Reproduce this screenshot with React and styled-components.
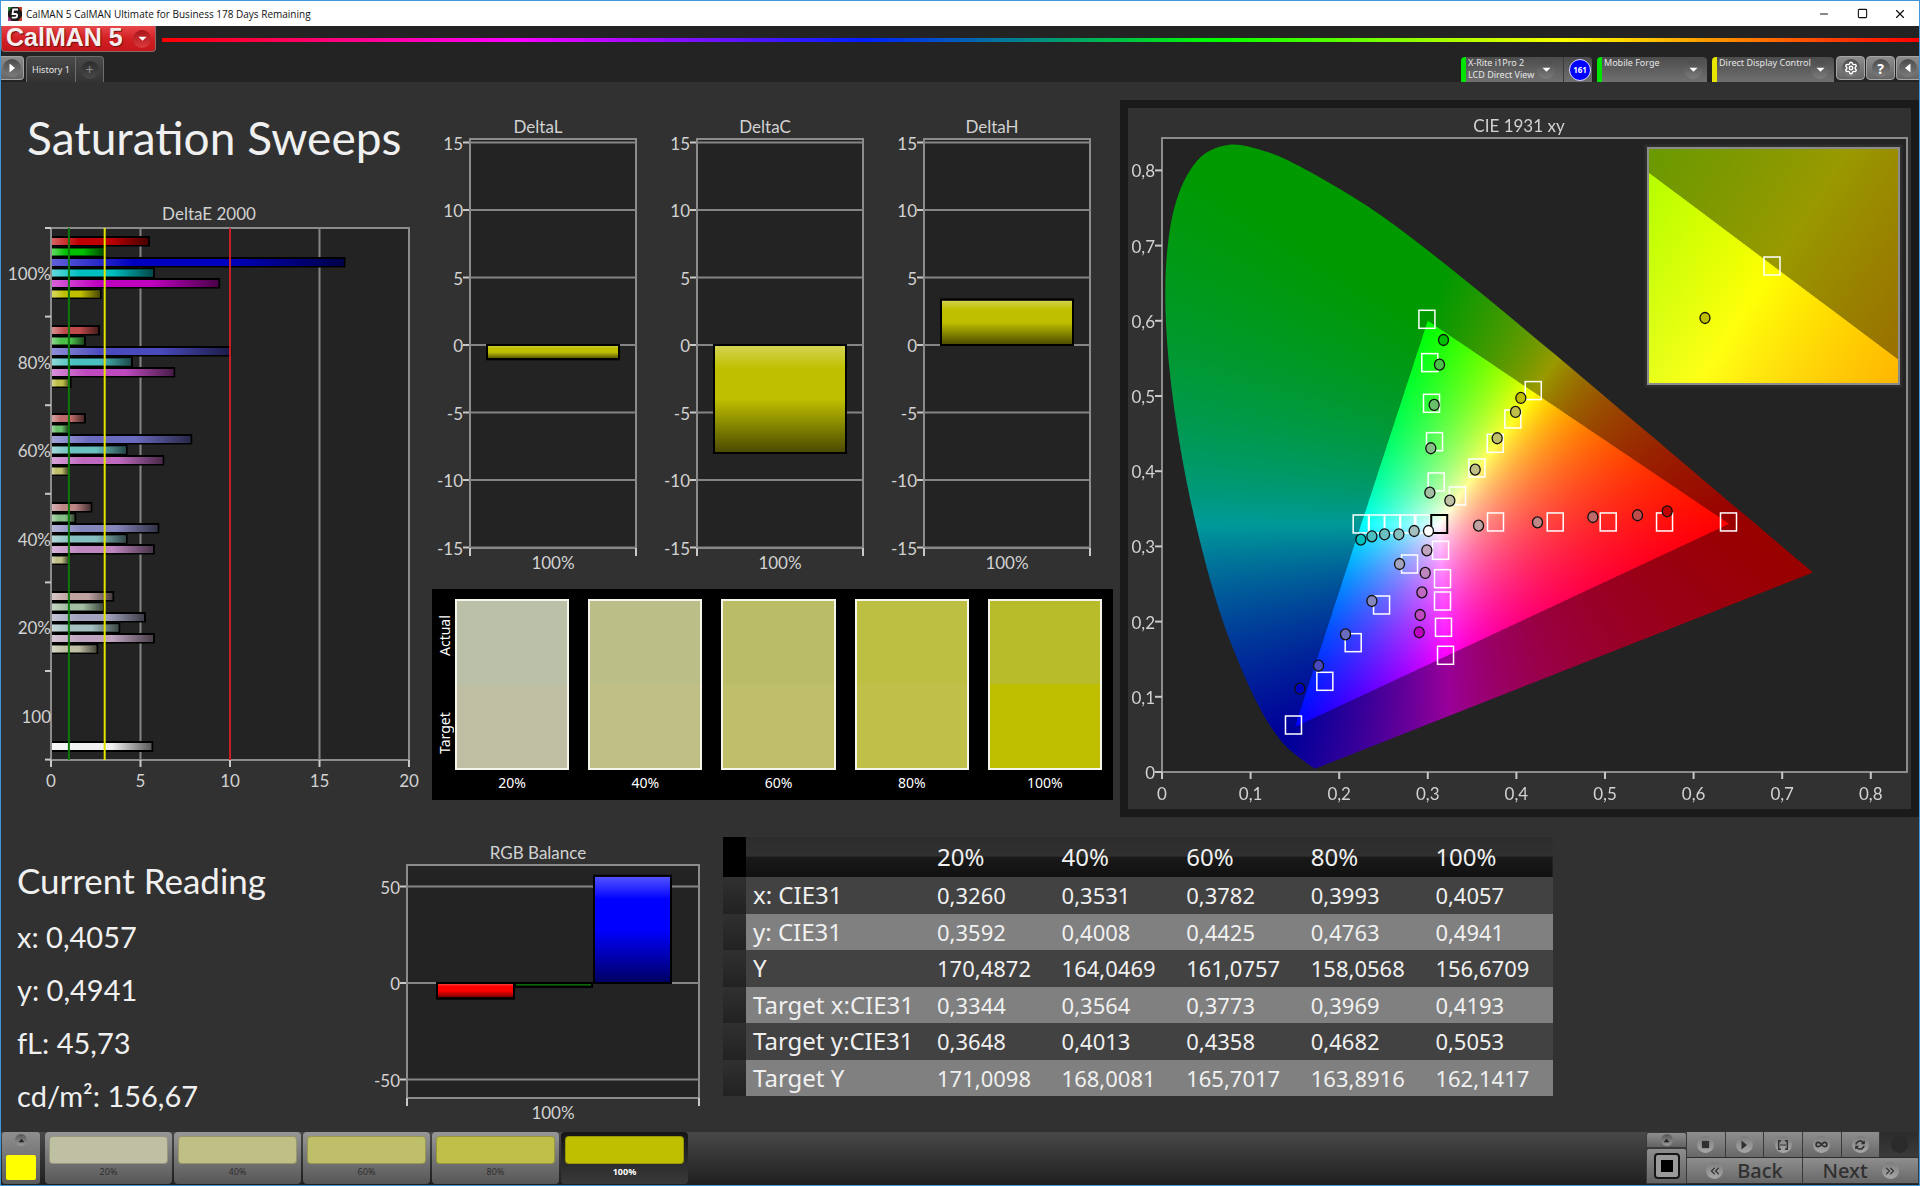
import { useEffect, useRef } from "react";
import styled, { createGlobalStyle, css } from "styled-components";
import { ChevronsLeft, ChevronsRight, Infinity as Loop, Minus, Settings, Square, X } from "lucide-react";
import { FaSyncAlt } from "react-icons/fa";

const HUES = {
  red: [1, 0, 0],
  green: [0, 1, 0],
  blue: [0, 0, 1],
  cyan: [0, 1, 1],
  magenta: [1, 0, 1],
  yellow: [1, 1, 0],
};
const FLOOR = { 100: 0, 80: 74, 60: 106, 40: 134, 20: 163 };

const sweepColor = (hue, level) =>
  `rgb(${HUES[hue].map((on) => (on ? 191 : FLOOR[level])).join(",")})`;

const deltaE = [
  { level: 100, values: [5.53, 3.05, 16.45, 5.8, 9.45, 2.83] },
  { level: 80, values: [2.73, 1.95, 10.07, 4.58, 6.94, 1.15] },
  { level: 60, values: [1.95, 1.06, 7.89, 4.28, 6.33, 1.06] },
  { level: 40, values: [2.31, 1.41, 6.05, 4.28, 5.8, 1.06] },
  { level: 20, values: [3.53, 3.01, 5.3, 3.87, 5.8, 2.64] },
];

const deltaCharts = [
  { title: "DeltaL", value: -1.05 },
  { title: "DeltaC", value: -8 },
  { title: "DeltaH", value: 3.36 },
];

const patches = [
  { level: 20, actual: "#bbc0a9" },
  { level: 40, actual: "#babf88" },
  { level: 60, actual: "#babd66" },
  { level: 80, actual: "#bcbf42" },
  { level: 100, actual: "#b8bc2b" },
];

const readings = ["x: 0,4057", "y: 0,4941", "fL: 45,73", "cd/m²: 156,67"];

const tableHead = ["20%", "40%", "60%", "80%", "100%"];
const tableRows = [
  ["x: CIE31", "0,3260", "0,3531", "0,3782", "0,3993", "0,4057"],
  ["y: CIE31", "0,3592", "0,4008", "0,4425", "0,4763", "0,4941"],
  ["Y", "170,4872", "164,0469", "161,0757", "158,0568", "156,6709"],
  ["Target x:CIE31", "0,3344", "0,3564", "0,3773", "0,3969", "0,4193"],
  ["Target y:CIE31", "0,3648", "0,4013", "0,4358", "0,4682", "0,5053"],
  ["Target Y", "171,0098", "168,0081", "165,7017", "163,8916", "162,1417"],
];

// spectral locus, 380 - 700 nm
const locus = [
  [0.1741, 0.005], [0.1714, 0.0051], [0.1644, 0.0109], [0.1566, 0.0177],
  [0.144, 0.0297], [0.1355, 0.0399], [0.1241, 0.0578], [0.1096, 0.0868],
  [0.0913, 0.1327], [0.0687, 0.2007], [0.0454, 0.295], [0.0235, 0.4127],
  [0.0082, 0.5384], [0.0039, 0.6548], [0.0139, 0.7502], [0.0389, 0.812],
  [0.0743, 0.8338], [0.1142, 0.8262], [0.1547, 0.8059], [0.2296, 0.7543],
  [0.3016, 0.6923], [0.3731, 0.6245], [0.4441, 0.5547], [0.5125, 0.4866],
  [0.5752, 0.4242], [0.627, 0.3725], [0.6658, 0.334], [0.6915, 0.3083],
  [0.719, 0.2809], [0.7347, 0.2653],
];

const targets = [
  [0.299, 0.602], [0.3023, 0.5444], [0.3042, 0.4903], [0.3076, 0.4393], [0.3095, 0.3857],
  [0.419, 0.5072], [0.396, 0.4695], [0.3761, 0.4371], [0.3554, 0.4043], [0.3335, 0.3671],
  [0.3764, 0.3325], [0.4438, 0.3325], [0.5036, 0.3325], [0.5672, 0.3325], [0.6394, 0.3325],
  [0.3144, 0.2948], [0.3166, 0.2571], [0.3166, 0.2274], [0.3177, 0.1924], [0.32, 0.1552],
  [0.2794, 0.2766], [0.2478, 0.2221], [0.2158, 0.172], [0.1838, 0.1206], [0.1484, 0.0625],
  [0.2248, 0.3298], [0.2421, 0.3298], [0.2602, 0.3298], [0.2775, 0.3298], [0.294, 0.3298],
];

// each list runs from 100% down to 20%
const measured = {
  green: [[0.3177, 0.5745], [0.3132, 0.5417], [0.3072, 0.4881], [0.3034, 0.4305], [0.3023, 0.3715]],
  yellow: [[0.405, 0.4974], [0.399, 0.4788], [0.3783, 0.4438], [0.3535, 0.4021], [0.3249, 0.3609]],
  red: [[0.5702, 0.3467], [0.5367, 0.3414], [0.4863, 0.3391], [0.4238, 0.332], [0.3573, 0.3276]],
  magenta: [[0.2903, 0.1858], [0.2914, 0.2088], [0.2933, 0.2389], [0.2971, 0.2647], [0.2989, 0.2948]],
  blue: [[0.1556, 0.1108], [0.1767, 0.1414], [0.2071, 0.1831], [0.2369, 0.2274], [0.2681, 0.2766]],
  cyan: [[0.2244, 0.309], [0.2369, 0.3134], [0.2512, 0.3161], [0.2673, 0.3161], [0.2846, 0.3205]],
};
const LEVELS = [100, 80, 60, 40, 20];

/* ---------- charts ---------- */

const DeltaEChart = () => {
  const left = 50;
  const top = 28;
  const bottom = 560;
  const unit = 17.9;
  const pitch = 10.5;
  const px = (v) => left + v * unit;
  const starts = [36, 125, 213, 302, 391];
  const hues = Object.keys(HUES);
  return (
    <Chart viewBox="0 0 423 596" role="img" aria-label="DeltaE 2000">
      <defs>
        <linearGradient id="shadeX">
          <stop offset="0" stopColor="#fff" stopOpacity=".38" />
          <stop offset=".28" stopColor="#fff" stopOpacity="0" />
          <stop offset=".6" stopColor="#000" stopOpacity="0" />
          <stop offset="1" stopColor="#000" stopOpacity=".62" />
        </linearGradient>
      </defs>
      <text x="208" y="20" textAnchor="middle">DeltaE 2000</text>
      <Plot x={left} y={top} width={unit * 20} height={bottom - top} />
      {[5, 10, 15].map((v) => (
        <GridLine key={v} x1={px(v)} x2={px(v)} y1={top} y2={bottom} />
      ))}
      {[0, 5, 10, 15, 20].map((v) => (
        <g key={v}>
          <Tick x1={px(v)} x2={px(v)} y1={bottom} y2={bottom + 7} />
          <text x={px(v)} y="587" textAnchor="middle">{v}</text>
        </g>
      ))}
      {[0, 1, 2, 3, 4, 5, 6].map((i) => (
        <Tick key={i} x1={left - 6} x2={left} y1={top + i * 88.6} y2={top + i * 88.6} />
      ))}
      {["100%", "80%", "60%", "40%", "20%", "100"].map((label, i) => (
        <text key={i} x={left} y={80 + i * 88.6} textAnchor="end">{label}</text>
      ))}
      {deltaE.map((group, g) =>
        group.values.map((v, i) => (
          <g key={`${g}-${i}`}>
            <rect x={left + 1} y={starts[g] + i * pitch} width={v * unit - 1} height="10.5" />
            <rect x={left + 1} y={starts[g] + i * pitch + 2} width={v * unit - 3} height="7" fill={sweepColor(hues[i], group.level)} />
            <rect x={left + 1} y={starts[g] + i * pitch + 2} width={v * unit - 3} height="7" fill="url(#shadeX)" />
          </g>
        ))
      )}
      <rect x={left + 1} y="541" width={5.71 * unit - 1} height="11" />
      <rect x={left + 1} y="543" width={5.71 * unit - 3} height="7" fill="#f0f0f0" />
      <rect x={left + 1} y="543" width={5.71 * unit - 3} height="7" fill="url(#shadeX)" />
      <Limit $color="#0b7a0b" x1={px(1)} x2={px(1)} y1={top} y2={bottom} />
      <Limit $color="#e2e200" x1={px(3)} x2={px(3)} y1={top} y2={bottom} />
      <Limit $color="#c81e28" x1={px(10)} x2={px(10)} y1={top} y2={bottom} />
    </Chart>
  );
};

const ColumnChart = ({ title, size, frame, zero, unit, ticks, bars }) => {
  const [left, top, right, bottom] = frame;
  const py = (v) => zero - v * unit;
  return (
    <Chart viewBox={`0 0 ${size[0]} ${size[1]}`} role="img" aria-label={title}>
      <defs>
        <linearGradient id="shadeY" x1="0" y1="0" x2="0" y2="1">
          <stop offset="0" stopColor="#fff" stopOpacity=".34" />
          <stop offset=".22" stopColor="#fff" stopOpacity="0" />
          <stop offset=".5" stopColor="#000" stopOpacity="0" />
          <stop offset="1" stopColor="#000" stopOpacity=".62" />
        </linearGradient>
      </defs>
      <text x={(left + right) / 2 - 15} y={top - 6} textAnchor="middle">{title}</text>
      <Plot x={left} y={top} width={right - left} height={bottom - top} />
      {ticks.map((v) => (
        <g key={v}>
          <GridLine x1={left} x2={right} y1={py(v)} y2={py(v)} />
          <Tick x1={left - 7} x2={left - 1} y1={py(v)} y2={py(v)} />
          <text x={left - 7} y={py(v) + 7} textAnchor="end">{v}</text>
        </g>
      ))}
      <Tick x1={left} x2={left} y1={bottom} y2={bottom + 8} />
      <Tick x1={right} x2={right} y1={bottom} y2={bottom + 8} />
      <text x={(left + right) / 2} y={bottom + 21} textAnchor="middle">100%</text>
      {bars.map(({ x, width, value, color }) => {
        const y = Math.min(py(0), py(value));
        const height = Math.abs(value) * unit;
        return (
          <g key={x}>
            <ColumnBar x={x} y={y} width={width} height={height} fill={color} />
            <ColumnBar x={x} y={y} width={width} height={height} fill="url(#shadeY)" />
          </g>
        );
      })}
    </Chart>
  );
};

const CIE = { width: 783, height: 701, left: 34, right: 779, top: 30, bottom: 664 };
const INSET = { x: 520, y: 40, width: 251, height: 236 };
const cx = (x) => CIE.left + x * 886;
const cy = (y) => CIE.bottom - y * 752;

// chromaticity to display colour, dimmed where it falls outside Rec.709
const shade = (x, y) => {
  const X = x / y;
  const Z = (1 - x - y) / y;
  const rgb = [
    3.2406 * X - 1.5372 - 0.4986 * Z,
    -0.9689 * X + 1.8758 + 0.0415 * Z,
    0.0557 * X - 0.204 + 1.057 * Z,
  ];
  const gain = Math.min(...rgb) < 0 ? 153 : 255;
  const peak = Math.max(...rgb);
  return rgb.map((c) => (Math.max(c, 0) / peak) * gain);
};

const paintArea = (width, height, toXY) => {
  const canvas = document.createElement("canvas");
  canvas.width = width;
  canvas.height = height;
  const ctx = canvas.getContext("2d");
  const image = ctx.createImageData(width, height);
  for (let j = 0; j < height; j++) {
    for (let i = 0; i < width; i++) {
      const sum = [0, 0, 0];
      for (const [di, dj] of [[0.25, 0.25], [0.75, 0.25], [0.25, 0.75], [0.75, 0.75]]) {
        const [x, y] = toXY(i + di, j + dj);
        shade(x, Math.max(y, 0.001)).forEach((c, k) => (sum[k] += c / 4));
      }
      image.data.set([...sum, 255], (j * width + i) * 4);
    }
  }
  ctx.putImageData(image, 0, 0);
  return canvas;
};

const traceLocus = (ctx) => {
  const pts = locus.map(([x, y]) => [cx(x), cy(y)]);
  ctx.beginPath();
  ctx.moveTo(...pts[0]);
  for (let i = 0; i < pts.length - 1; i++) {
    const a = pts[Math.max(i - 1, 0)];
    const b = pts[i];
    const c = pts[i + 1];
    const d = pts[Math.min(i + 2, pts.length - 1)];
    ctx.bezierCurveTo(
      b[0] + (c[0] - a[0]) / 6, b[1] + (c[1] - a[1]) / 6,
      c[0] - (d[0] - b[0]) / 6, c[1] - (d[1] - b[1]) / 6,
      c[0], c[1]
    );
  }
  ctx.closePath();
};

const CieChart = () => {
  const canvasRef = useRef(null);

  useEffect(() => {
    const ctx = canvasRef.current.getContext("2d");
    ctx.fillStyle = "#232323";
    ctx.fillRect(CIE.left, CIE.top, CIE.right - CIE.left, CIE.bottom - CIE.top);
    ctx.save();
    traceLocus(ctx);
    ctx.clip();
    ctx.drawImage(
      paintArea(CIE.width, CIE.height, (i, j) => [(i - CIE.left) / 886, (CIE.bottom - j) / 752]),
      0, 0
    );
    ctx.restore();
    ctx.drawImage(
      paintArea(INSET.width, INSET.height, (i, j) => [
        0.4193 + (i - INSET.width / 2) / 4950,
        0.5053 - (j - INSET.height / 2) / 4670,
      ]),
      INSET.x, INSET.y
    );
  }, []);

  return (
    <CiePanel>
      <CieCanvas ref={canvasRef} width={CIE.width} height={CIE.height} />
      <CieOverlay viewBox={`0 0 ${CIE.width} ${CIE.height}`} role="img" aria-label="CIE 1931 xy">
        <text x="391" y="24" textAnchor="middle">CIE 1931 xy</text>
        <Outline x={CIE.left} y={CIE.top} width={CIE.right - CIE.left} height={CIE.bottom - CIE.top} />
        {[0, 1, 2, 3, 4, 5, 6, 7, 8].map((n) => (
          <g key={n}>
            <Tick x1={cx(n / 10)} x2={cx(n / 10)} y1={CIE.bottom} y2={CIE.bottom + 7} />
            <text x={cx(n / 10)} y="692" textAnchor="middle">{n ? `0,${n}` : "0"}</text>
            <Tick x1={CIE.left - 7} x2={CIE.left} y1={cy(n / 10)} y2={cy(n / 10)} />
            <text x={CIE.left - 7} y={cy(n / 10) + 7} textAnchor="end">{n ? `0,${n}` : "0"}</text>
          </g>
        ))}
        {targets.map(([x, y]) => (
          <Target key={`${x}-${y}`} x={cx(x) - 8} y={cy(y) - 9} width="16" height="18" />
        ))}
        <Target $dark x={cx(0.3129) - 8} y={cy(0.3298) - 9} width="16" height="18" />
        {Object.entries(measured).map(([hue, list]) =>
          list.map(([x, y], i) => (
            <Reading key={`${hue}-${i}`} cx={cx(x)} cy={cy(y)} rx="5" ry="5.5" fill={sweepColor(hue, LEVELS[i])} />
          ))
        )}
        <Reading cx={cx(0.3008)} cy={cy(0.3205)} rx="5" ry="5.5" fill="#fff" />
        <InsetShadow x={INSET.x - 2} y={INSET.y - 2} width={INSET.width + 4} height={INSET.height + 4} />
        <Outline x={INSET.x} y={INSET.y} width={INSET.width} height={INSET.height} />
        <Target x={INSET.x + 116} y={INSET.y + 109} width="16" height="18" />
        <Reading cx={INSET.x + 57} cy={INSET.y + 170} rx="5" ry="5.5" fill={sweepColor("yellow", 100)} />
      </CieOverlay>
    </CiePanel>
  );
};

/* ---------- icons ---------- */

const Glyph = ({ d, size = 10 }) => (
  <svg width={size} height={size} viewBox="0 0 10 10" fill="currentColor" aria-hidden="true">
    <path d={d} />
  </svg>
);
const DOWN = "M0.5 3h9L5 7.6z";
const UP = "M1 7.5h8L5 2.5z";
const RIGHT = "M2.5 0.5v9L8 5z";
const LEFT = "M7.5 0.5v9L2 5z";
const STOP = "M1 1h8v8h-8z";
const RANGE =
  "M0 0h3v1.4H1.4v7.2H3V10H0zM10 0H7v1.4h1.6v7.2H7V10h3zM2.4 4.3h1.3v1.4H2.4zM4.4 4.3h1.2v1.4H4.4zM6.3 4.3h1.3v1.4H6.3z";

const AppIcon = () => (
  <svg width="14" height="14" viewBox="0 0 14 14" aria-hidden="true">
    <rect width="14" height="14" fill="#1d1a1a" />
    <path d="M0 0h4L0 5z" fill="#2e8b3c" />
    <path d="M10 0h4v5z" fill="#c0392b" />
    <path d="M0 9v5h4z" fill="#b03a8c" />
    <path d="M14 9v5h-4z" fill="#d0452f" />
    <path d="M10 2.5H5.2L4.6 7h3.2q1.5 0 1.3 1.8t-2 1.9H3.8" fill="none" stroke="#fff" strokeWidth="1.8" />
  </svg>
);

/* ---------- app ---------- */

const App = () => (
  <Window>
    <GlobalStyle />
    <TitleBar>
      <AppIcon />
      <WindowTitle>CalMAN 5 CalMAN Ultimate for Business 178 Days Remaining</WindowTitle>
      <WindowButton aria-label="Minimize"><Minus size={12} strokeWidth={2} /></WindowButton>
      <WindowButton aria-label="Maximize"><Square size={11} strokeWidth={2.4} /></WindowButton>
      <WindowButton aria-label="Close"><X size={14} strokeWidth={2} /></WindowButton>
    </TitleBar>

    <BrandBar>
      <Brand>
        CalMAN 5
        <Dimple $red><Glyph d={DOWN} size={9} /></Dimple>
      </Brand>
      <Rainbow />
    </BrandBar>

    <TabBar>
      <SquareButton $edge="left" aria-label="Open sidebar"><Dimple><Glyph d={RIGHT} /></Dimple></SquareButton>
      <Tabs>
        <Tab>History 1</Tab>
        <Tab $add aria-label="Add history"><Dimple $dark>+</Dimple></Tab>
      </Tabs>
      <Device $width={131} $status="#00e400">
        <span>X-Rite i1Pro 2<br />LCD Direct View</span>
        <Dimple><Glyph d={DOWN} size={9} /></Dimple>
        <CounterCell><Counter>161</Counter></CounterCell>
      </Device>
      <Device $width={110} $status="#00e400">
        <span>Mobile Forge</span>
        <Dimple><Glyph d={DOWN} size={9} /></Dimple>
      </Device>
      <Device $width={122} $status="#e6e600">
        <span>Direct Display Control</span>
        <Dimple><Glyph d={DOWN} size={9} /></Dimple>
      </Device>
      <SquareButton aria-label="Settings"><Dimple><Settings size={14} strokeWidth={2.4} /></Dimple></SquareButton>
      <SquareButton aria-label="Help"><Dimple>?</Dimple></SquareButton>
      <SquareButton $edge="right" aria-label="Collapse"><Dimple><Glyph d={LEFT} /></Dimple></SquareButton>
    </TabBar>

    <Main>
      <TopRow>
        <section>
          <PageTitle>Saturation Sweeps</PageTitle>
          <DeltaEChart />
        </section>
        <Middle>
          <DeltaRow>
            {deltaCharts.map(({ title, value }) => (
              <ColumnChart
                key={title}
                title={title}
                size={[227, 460]}
                frame={[46, 24, 212, 433]}
                zero={230}
                unit={13.5}
                ticks={[15, 10, 5, 0, -5, -10, -15]}
                bars={[{ x: 63, width: 132, value, color: "#bfbf00" }]}
              />
            ))}
          </DeltaRow>
          <PatchPanel>
            <PatchSides>
              <span>Actual</span>
              <span>Target</span>
            </PatchSides>
            {patches.map(({ level, actual }) => (
              <PatchItem key={level}>
                <Patch $actual={actual} $target={sweepColor("yellow", level)} />
                <figcaption>{level}%</figcaption>
              </PatchItem>
            ))}
          </PatchPanel>
        </Middle>
        <CieChart />
      </TopRow>

      <BottomRow>
        <Current>
          <h2>Current Reading</h2>
          {readings.map((text) => (
            <p key={text}>{text}</p>
          ))}
        </Current>
        <ColumnChart
          title="RGB Balance"
          size={[356, 290]}
          frame={[40, 28, 332, 261]}
          zero={146}
          unit={1.93}
          ticks={[50, 0, -50]}
          bars={[
            { x: 70, width: 77, value: -8, color: "#f00" },
            { x: 148, width: 77, value: -2, color: "#0a6a0a" },
            { x: 227, width: 77, value: 55.5, color: "#00f" },
          ]}
        />
        <DataTable>
          <thead>
            <tr>
              <Corner />
              <LabelHead />
              {tableHead.map((text) => (
                <th key={text} scope="col">{text}</th>
              ))}
            </tr>
          </thead>
          <tbody>
            {tableRows.map(([label, ...cells]) => (
              <tr key={label}>
                <Handle />
                <th scope="row">{label}</th>
                {cells.map((text, i) => (
                  <td key={i}>{text}</td>
                ))}
              </tr>
            ))}
          </tbody>
        </DataTable>
      </BottomRow>
    </Main>

    <Footer>
      <CurrentColor aria-label="Current pattern">
        <MiniDimple><Glyph d={UP} size={7} /></MiniDimple>
        <i />
      </CurrentColor>
      {patches.map(({ level }) => (
        <Step key={level} $active={level === 100} $color={sweepColor("yellow", level)}>
          <i />
          {level}%
        </Step>
      ))}
      <Controls>
        <PatternStack>
          <PatternButton aria-label="Pattern options"><MiniDimple><Glyph d={UP} size={7} /></MiniDimple></PatternButton>
          <PatternButton aria-label="Pattern window"><PatternIcon /></PatternButton>
        </PatternStack>
        <Transport>
          <ControlButton aria-label="Stop"><Knob><Glyph d={STOP} size={9} /></Knob></ControlButton>
          <ControlButton aria-label="Read"><Knob><Glyph d={RIGHT} /></Knob></ControlButton>
          <ControlButton aria-label="Read series"><Knob><Glyph d={RANGE} /></Knob></ControlButton>
          <ControlButton aria-label="Read continuously"><Knob><Loop size={13} strokeWidth={3} /></Knob></ControlButton>
          <ControlButton aria-label="Refresh"><Knob><FaSyncAlt size={10} /></Knob></ControlButton>
          <ControlButton $off aria-label="Status" disabled><Knob $off /></ControlButton>
          <ControlButton $wide><Knob><ChevronsLeft size={14} /></Knob>Back</ControlButton>
          <ControlButton $wide>Next<Knob><ChevronsRight size={14} /></Knob></ControlButton>
        </Transport>
      </Controls>
    </Footer>
  </Window>
);

export default App;

const GlobalStyle = createGlobalStyle`
  * {
    box-sizing: border-box;
  }
  body {
    margin: 0;
    background: #313131;
    font-family: "Noto Sans", "Open Sans", sans-serif;
    color: #e6e6e6;
  }
  button {
    font-family: inherit;
    color: inherit;
    border: 0;
    padding: 0;
    margin: 0;
    background: none;
  }
`;

const Window = styled.div`
  display: flex;
  flex-direction: column;
  min-height: 100vh;
  border: 1px solid #3f97d8;
  background: #313131;
`;

const TitleBar = styled.header`
  display: flex;
  align-items: center;
  height: 25px;
  padding-left: 7px;
  background: #fff;
  color: #111;
`;

const WindowTitle = styled.span`
  flex: 1;
  padding-left: 4px;
  font-family: "Open Sans", sans-serif;
  font-size: 10px;
`;

const WindowButton = styled.button`
  display: flex;
  align-items: center;
  justify-content: center;
  width: 38px;
  height: 24px;
`;

const BrandBar = styled.div`
  display: flex;
  align-items: center;
  gap: 6px;
  height: 28px;
  background: #232323;
`;

const Brand = styled.button`
  display: flex;
  align-items: center;
  justify-content: space-between;
  align-self: flex-start;
  width: 155px;
  height: 26px;
  padding: 0 4px 4px 4px;
  border: 1px solid #8a6a6a;
  border-top: 0;
  border-radius: 0 0 4px 4px;
  background: linear-gradient(#e8484a, #d32024 50%, #c4171b);
  color: #f4f0f0;
  font: bold 25px/20px "Liberation Sans", sans-serif;
  text-shadow: 1px 1px 1px #6a1010;
  white-space: nowrap;
`;

const Rainbow = styled.div`
  flex: 1;
  height: 4px;
  background: linear-gradient(90deg, #f00, #f0f 20%, #0020ff 40%, #0f0 60%, #ff0 80%, #f00);
`;

const Dimple = styled.span`
  display: inline-flex;
  align-items: center;
  justify-content: center;
  flex: none;
  width: 18px;
  height: 18px;
  border-radius: 50%;
  background: linear-gradient(#4c4c4c, #7c7c7c);
  color: #fff;
  font-size: 14px;
  font-weight: bold;
  text-shadow: none;
  ${(props) =>
    props.$red &&
    css`
      margin-top: 4px;
      background: linear-gradient(#a8151a, #dc3a3e);
    `}
  ${(props) =>
    props.$dark &&
    css`
      background: linear-gradient(#2c2c2c, #484848);
      color: #8a8a8a;
      font-weight: normal;
    `}
`;

const TabBar = styled.nav`
  display: flex;
  align-items: flex-end;
  height: 28px;
  background: #232323;
`;

const SquareButton = styled.button`
  display: flex;
  align-items: center;
  justify-content: center;
  width: ${(props) => (props.$edge ? 23 : 29)}px;
  height: 24px;
  margin: 0 ${(props) => (props.$edge ? 0 : 1)}px 2px 0;
  border: 1px solid #a4a4a4;
  border-radius: 4px;
  background: linear-gradient(#8c8c8c, #666);
  ${(props) => props.$edge === "left" && "border-radius: 0 4px 4px 0; border-left: 0;"}
  ${(props) => props.$edge === "right" && "border-radius: 4px 0 0 4px; border-right: 0;"}
`;

const Tabs = styled.div`
  display: flex;
  flex: 1;
  padding-left: 2px;
`;

const Tab = styled.button`
  width: ${(props) => (props.$add ? 28 : 50)}px;
  height: 26px;
  border: 1px solid #6e6e6e;
  border-bottom: 0;
  border-left-width: ${(props) => (props.$add ? 0 : 1)}px;
  border-radius: ${(props) => (props.$add ? "0 4px 0 0" : "4px 0 0 0")};
  background: linear-gradient(#4a4a4a, #333);
  font-size: 9px;
`;

const Device = styled.button`
  display: flex;
  align-items: center;
  width: ${(props) => props.$width}px;
  height: 25px;
  margin-right: 5px;
  padding-right: 5px;
  border-left: 5px solid ${(props) => props.$status};
  border-radius: 4px 4px 0 0;
  background: linear-gradient(#4c4c4c, #707070);
  font-size: 9px;
  line-height: 12px;
  text-align: left;
  & > span:first-child {
    flex: 1;
    align-self: flex-start;
    padding-left: 2px;
    white-space: nowrap;
  }
  &:nth-of-type(4) {
    margin-right: 2px;
  }
`;

const CounterCell = styled.span`
  display: flex;
  align-items: center;
  height: 100%;
  margin-left: 8px;
  margin-right: -4px;
  padding-left: 5px;
  border-left: 1px solid #3c3c3c;
`;

const Counter = styled.strong`
  width: 22px;
  height: 22px;
  border: 1px solid #dcdcff;
  border-radius: 50%;
  background: #00f;
  color: #fff;
  font-size: 8px;
  line-height: 20px;
  text-align: center;
`;

const Main = styled.main`
  flex: 1;
`;

const TopRow = styled.div`
  display: grid;
  grid-template-columns: 423fr 696fr 799fr;
  align-items: start;
`;

const PageTitle = styled.h1`
  margin: 0;
  padding: 24px 0 30px 26px;
  font: 46px/64px Lato, sans-serif;
  color: #f0f0f0;
`;

const Middle = styled.section`
  padding-top: 33px;
`;

const DeltaRow = styled.div`
  display: grid;
  grid-template-columns: repeat(3, 1fr);
  padding-right: 15px;
`;

const Chart = styled.svg`
  display: block;
  width: 100%;
  height: auto;
  text {
    font: 17px Lato, sans-serif;
    fill: #d2d2d2;
  }
`;

const Plot = styled.rect`
  fill: #232323;
  stroke: #8c8c8c;
  stroke-width: 2;
`;

const Outline = styled(Plot)`
  fill: none;
`;

const GridLine = styled.line`
  stroke: #858585;
  stroke-width: 2;
`;

const Tick = styled.line`
  stroke: #c8c8c8;
  stroke-width: 2;
`;

const Limit = styled.line`
  stroke: ${(props) => props.$color};
  stroke-width: 2;
`;

const ColumnBar = styled.rect`
  stroke: #000;
  stroke-width: 2;
`;

const Target = styled.rect`
  fill: none;
  stroke: ${(props) => (props.$dark ? "#000" : "#fff")};
  stroke-width: ${(props) => (props.$dark ? 2 : 1.5)};
`;

const Reading = styled.ellipse`
  stroke: #111;
  stroke-width: 1.3;
`;

const InsetShadow = styled.rect`
  fill: none;
  stroke: #2e2e2e;
  stroke-width: 3;
`;

const PatchPanel = styled.div`
  display: flex;
  gap: 19px;
  height: 211px;
  margin: 14px 7px 0 8px;
  padding: 10px 11px 0 3px;
  background: #000;
  color: #fff;
  font-size: 14px;
`;

const PatchSides = styled.div`
  display: flex;
  flex-direction: row-reverse;
  justify-content: space-between;
  width: 20px;
  height: 171px;
  margin-right: -19px;
  padding: 16px 0;
  writing-mode: vertical-rl;
  transform: rotate(180deg);
  line-height: 20px;
`;

const PatchItem = styled.figure`
  flex: 1;
  margin: 0;
  text-align: center;
  line-height: 26px;
`;

const Patch = styled.div`
  height: 171px;
  border: 2px solid #f4f4ea;
  background: linear-gradient(${(props) => `${props.$actual} 50%, ${props.$target} 50%`});
`;

const CiePanel = styled.section`
  display: grid;
  margin-top: 18px;
  border: 8px solid #1a1a1a;
`;

const CieCanvas = styled.canvas`
  grid-area: 1 / 1;
  width: 100%;
`;

const CieOverlay = styled(Chart)`
  grid-area: 1 / 1;
`;

const BottomRow = styled.div`
  display: grid;
  grid-template-columns: 366fr 356fr 830fr 366fr;
  align-items: start;
  padding-top: 20px;
`;

const Current = styled.section`
  padding: 13px 0 0 16px;
  font-family: Lato, sans-serif;
  color: #f0f0f0;
  h2 {
    margin: 0;
    font-size: 35px;
    font-weight: normal;
    line-height: 60px;
  }
  p {
    margin: 0;
    font-size: 29px;
    line-height: 53px;
  }
`;

const DataTable = styled.table`
  width: 100%;
  height: 259px;
  table-layout: fixed;
  border-collapse: collapse;
  color: #f0f0f0;
  font-size: 22px;
  line-height: 28px;
  th,
  td {
    padding: 0 0 0 7px;
    font-weight: normal;
    text-align: left;
    white-space: nowrap;
  }
  th {
    font-size: 24px;
  }
  thead tr {
    height: 40px;
    background: linear-gradient(#2c2c2c, #303030 48%, #191919 50%, #111);
  }
  tbody tr {
    background: #424242;
  }
  tbody tr:nth-child(even) {
    background: #808080;
  }
`;

const Corner = styled.td`
  width: 23px;
  background: #000;
`;

const LabelHead = styled.td`
  width: 184px;
`;

const Handle = styled.td`
  background: linear-gradient(#303030, #222);
`;

const Footer = styled.footer`
  display: flex;
  gap: 2px;
  height: 53px;
  padding: 0 0 1px 1px;
  background: linear-gradient(#484848, #1f1f1f);
`;

const CurrentColor = styled.button`
  display: flex;
  flex-direction: column;
  align-items: center;
  justify-content: space-between;
  width: 38px;
  margin-right: 3px;
  padding: 2px 4px 4px;
  border-radius: 3px;
  background: linear-gradient(#8e8e8e, #5a5a5a);
  i {
    width: 30px;
    height: 25px;
    border-radius: 2px;
    background: #ff0;
  }
`;

const MiniDimple = styled.span`
  display: flex;
  align-items: center;
  justify-content: center;
  width: 12px;
  height: 12px;
  border-radius: 50%;
  background: linear-gradient(#555, #999);
  color: #222;
`;

const Step = styled.button`
  display: flex;
  flex-direction: column;
  align-items: center;
  width: 127px;
  padding: 4px;
  border-radius: 4px;
  background: ${(props) =>
    props.$active ? "linear-gradient(#161616, #3a3a3a)" : "linear-gradient(#979797, #565656)"};
  color: ${(props) => (props.$active ? "#fff" : "#2e2e2e")};
  font-size: 9px;
  font-weight: ${(props) => (props.$active ? "bold" : "normal")};
  line-height: 16px;
  i {
    width: 100%;
    height: 31px;
    border: 1px solid rgba(0, 0, 0, 0.2);
    border-radius: 4px;
    background: ${(props) => props.$color};
  }
`;

const Controls = styled.div`
  display: flex;
  margin-left: auto;
`;

const PatternStack = styled.div`
  display: grid;
  grid-template-rows: 16px 36px;
  width: 41px;
`;

const PatternButton = styled.button`
  display: flex;
  align-items: center;
  justify-content: center;
  border: 1px solid #3a3a3a;
  border-radius: 3px 3px 0 0;
  background: linear-gradient(#8e8e8e, #636363);
`;

const PatternIcon = styled.i`
  width: 26px;
  height: 26px;
  border: 2px solid #161616;
  border-radius: 4px;
  background: linear-gradient(#000, #000) center / 12px 12px no-repeat, #9a9a9a;
`;

const Transport = styled.div`
  display: grid;
  grid-template-columns: repeat(6, 1fr);
  grid-template-rows: 26px 26px;
  width: 232px;
`;

const ControlButton = styled.button`
  display: flex;
  align-items: center;
  justify-content: center;
  gap: 14px;
  grid-column: span ${(props) => (props.$wide ? 3 : 1)};
  border-right: 1px solid #3a3a3a;
  border-bottom: 1px solid #2c2c2c;
  background: ${(props) =>
    props.$off ? "linear-gradient(#2c2c2c, #3a3a3a)" : "linear-gradient(#8e8e8e, #686868)"};
  color: #303030;
  font-size: 20px;
  font-weight: 500;
  line-height: 24px;
`;

const Knob = styled.span`
  display: flex;
  align-items: center;
  justify-content: center;
  width: 17px;
  height: 17px;
  border-radius: 50%;
  background: ${(props) => (props.$off ? "#2a2a2a" : "linear-gradient(#7c7c7c, #a8a8a8)")};
`;
